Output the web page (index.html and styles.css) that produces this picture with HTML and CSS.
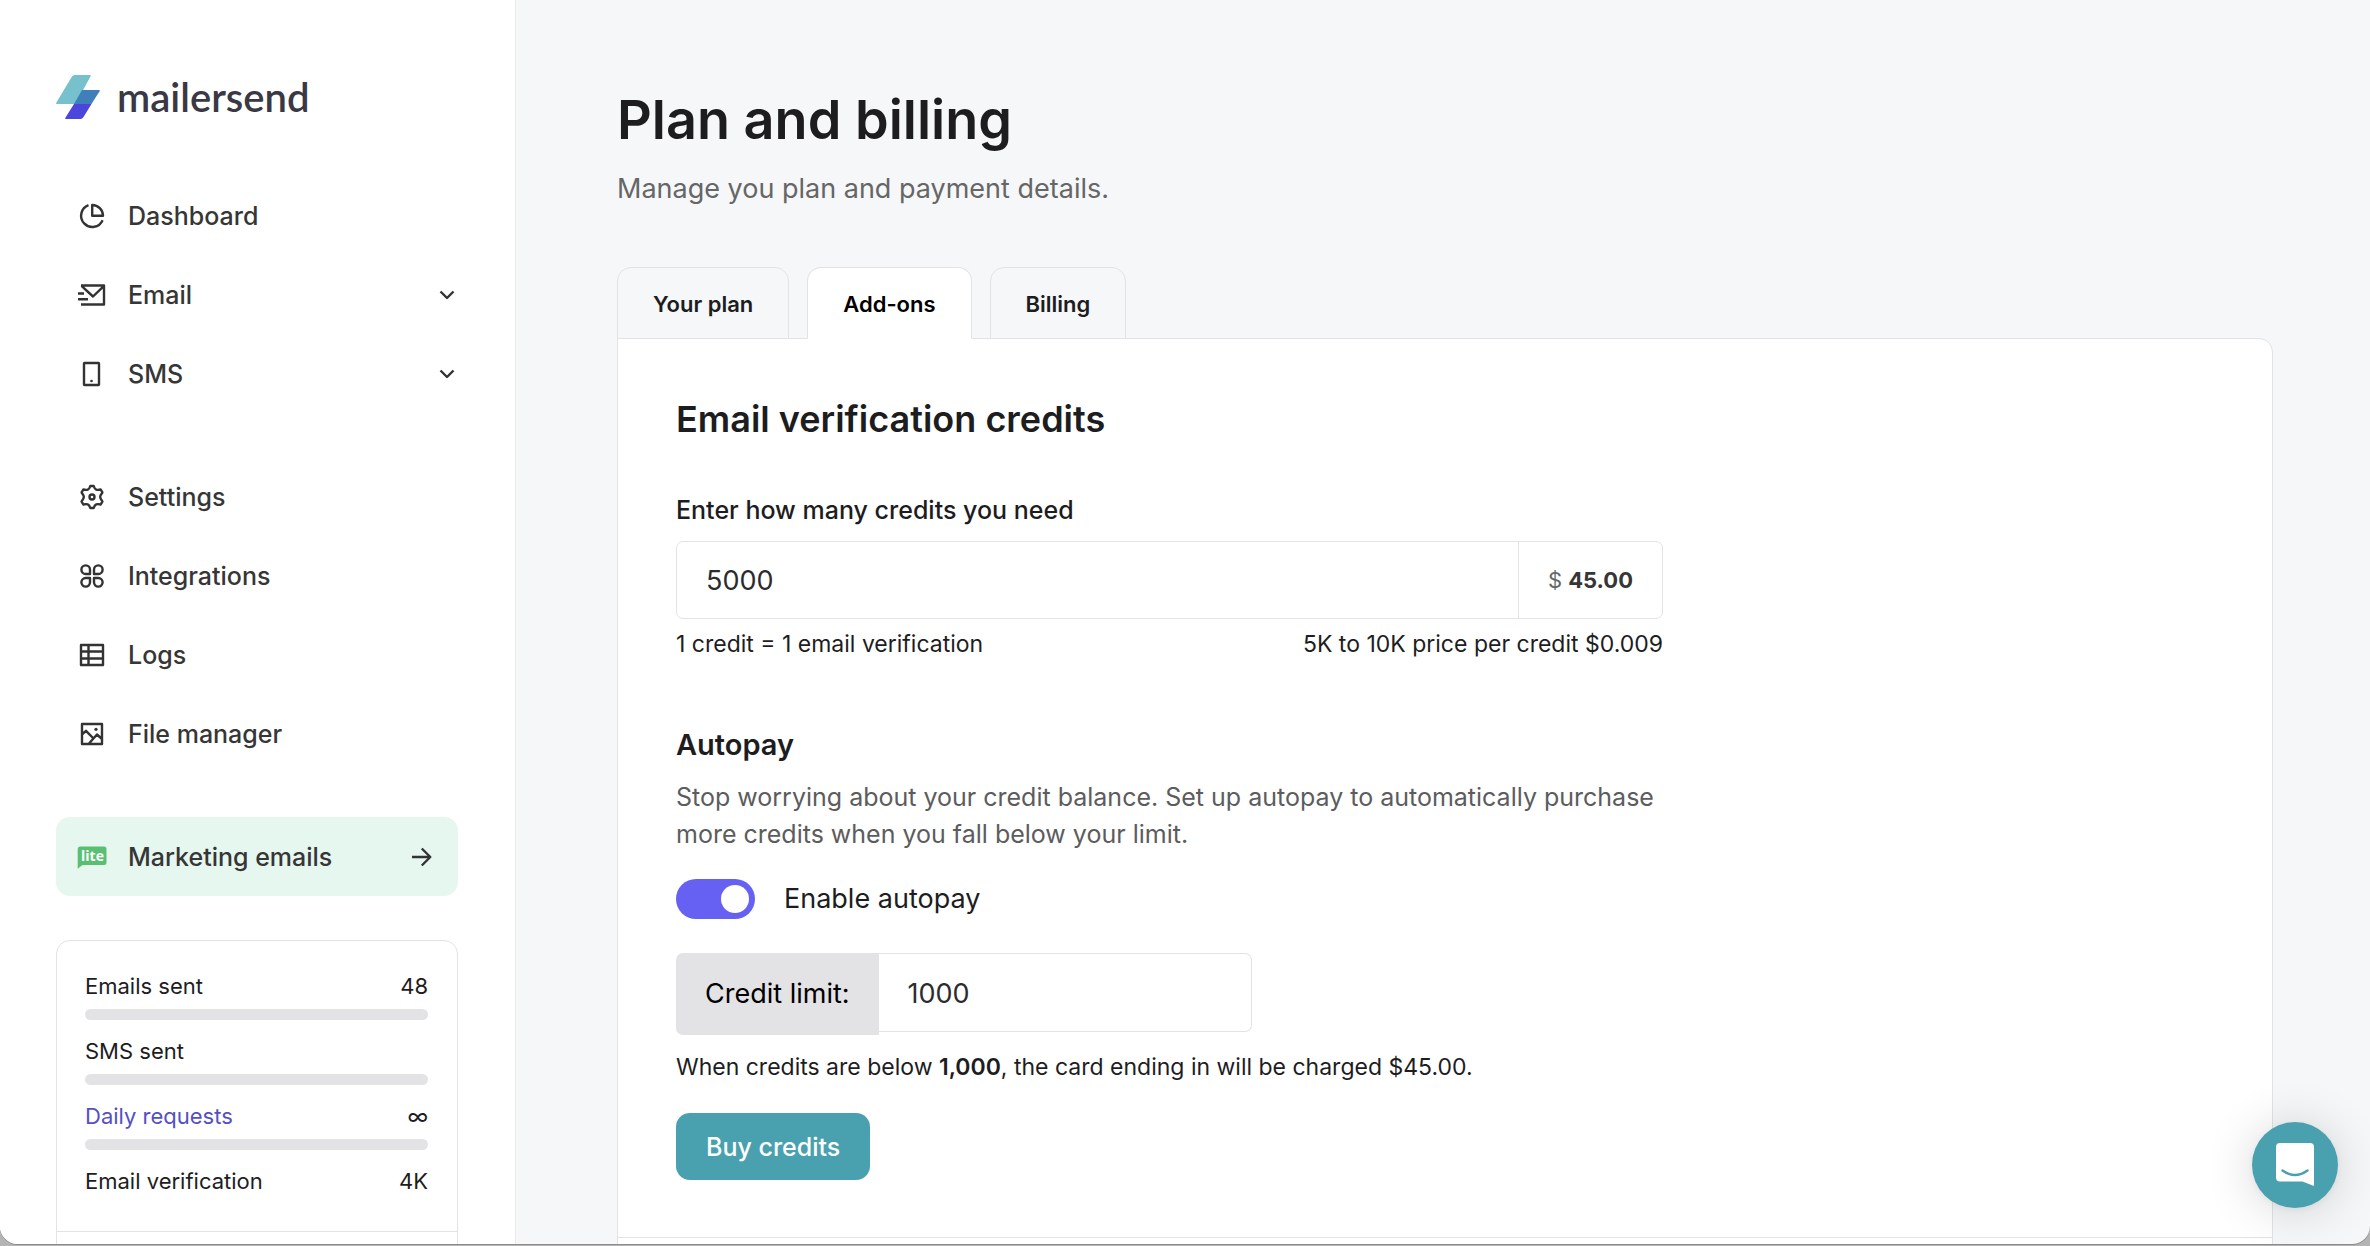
FILE: index.html
```html
<!DOCTYPE html>
<html lang="en">
<head>
<meta charset="utf-8">
<meta name="viewport" content="width=device-width, initial-scale=1">
<title>Plan and billing</title>
<link rel="stylesheet" href="styles.css">
</head>
<body>
<div class="app">
  <aside class="sidebar">
    <a class="logo" href="#">
      <svg class="logo-mark" viewBox="0 0 44 44" aria-hidden="true">
        <path d="M18.500 0H34q1.300 0 .6 1.200L19.500 29H1Q-.4 29 .4 27.600L16 1.500Q17 0 18.500 0Z" fill="#76c1cb"/>
        <path d="M26 15H43q1.300 0 .6 1.200L35.500 29H18Z" fill="#3f80ba"/>
        <path d="M18 29H35.500L27.500 42Q26.200 44 24.500 44H10Q8.500 44 9.400 42.700Z" fill="#4b45dc"/>
      </svg>
      <span class="logo-name">mailersend</span>
    </a>

    <nav class="nav" aria-label="Main">
      <ul class="nav-group">
        <li><a class="nav-item" href="#">
          <svg class="icon" viewBox="0 0 28 28" aria-hidden="true"><path d="M10.500 3.200A11.200 11.200 0 1 0 24.600 18.200"/><path d="M14.200 3V13.800H25A10.900 10.900 0 0 0 14.200 3Z"/></svg>
          <span class="nav-label">Dashboard</span></a></li>
        <li><a class="nav-item" href="#">
          <svg class="icon" viewBox="0 0 28 28" aria-hidden="true"><path d="M3 4.500H26V23.500H3M3.500 4.800L15 15.500L26 4.800M0 12.500H6M0 18.300H10"/></svg>
          <span class="nav-label">Email</span>
          <svg class="chevron" viewBox="0 0 22 22" aria-hidden="true"><path d="M4.500 7.500L11 14L17.500 7.500"/></svg></a></li>
        <li><a class="nav-item" href="#">
          <svg class="icon" viewBox="0 0 28 28" aria-hidden="true"><rect x="6" y="3" width="15" height="22" rx=".5"/><circle class="dot" cx="13.500" cy="21" r="1.300"/></svg>
          <span class="nav-label">SMS</span>
          <svg class="chevron" viewBox="0 0 22 22" aria-hidden="true"><path d="M4.500 7.500L11 14L17.500 7.500"/></svg></a></li>
      </ul>
      <ul class="nav-group">
        <li><a class="nav-item" href="#">
          <svg class="icon" viewBox="0 0 28 28" aria-hidden="true"><path d="M12.300 3H15.700Q16.600 6 18.200 6.600Q19.800 7.300 22.700 6.500L24.400 9.400Q22.200 12.300 22.200 14Q22.200 15.700 24.400 18.600L22.700 21.500Q19.800 20.700 18.200 21.400Q16.600 22 15.700 25H12.300Q11.400 22 9.800 21.400Q8.200 20.700 5.300 21.500L3.600 18.600Q5.800 15.700 5.800 14Q5.800 12.300 3.600 9.400L5.300 6.500Q8.200 7.300 9.800 6.600Q11.400 6 12.300 3Z"/><circle cx="14" cy="14" r="2.500"/></svg>
          <span class="nav-label">Settings</span></a></li>
        <li><a class="nav-item" href="#">
          <svg class="icon" viewBox="0 0 28 28" aria-hidden="true"><path d="M12 12H7.700A4.300 4.300 0 1 1 12 7.700ZM16 12H20.300A4.300 4.300 0 1 0 16 7.700ZM12 16H7.700A4.300 4.300 0 1 0 12 20.300ZM16 16H20.300A4.300 4.300 0 1 1 16 20.300Z"/></svg>
          <span class="nav-label">Integrations</span></a></li>
        <li><a class="nav-item" href="#">
          <svg class="icon" viewBox="0 0 28 28" aria-hidden="true"><path d="M3 4H25V24H3ZM3 10.500H25M3 17.500H25M10.500 4V24"/></svg>
          <span class="nav-label">Logs</span></a></li>
        <li><a class="nav-item" href="#">
          <svg class="icon" viewBox="0 0 28 28" aria-hidden="true"><path d="M4 4H24V24H4ZM4.500 14L8 10.800L16 19M11 23.500L19 14.500L24 19"/><circle class="dot" cx="18" cy="9.300" r="1.600"/></svg>
          <span class="nav-label">File manager</span></a></li>
      </ul>
    </nav>

    <a class="nav-item promo" href="#">
      <svg class="icon lite" viewBox="0 0 28 28" aria-hidden="true"><path d="M2 3.500H26Q28.500 3.500 28.500 6V19.500Q28.500 22 26 22H4.500L-.3 25.800V6Q-.3 3.500 2 3.500Z"/><text x="14.500" y="17.500">lite</text></svg>
      <span class="nav-label">Marketing emails</span>
      <svg class="icon" viewBox="0 0 28 28" aria-hidden="true"><path d="M4 14H22M13.800 5.500L22.300 14L13.800 22.500"/></svg>
    </a>

    <section class="usage" aria-label="Usage">
      <div class="usage-list">
        <div class="usage-row">
          <div class="usage-line"><label for="use-emails">Emails sent</label><span>48</span></div>
          <progress id="use-emails" value="0" max="100"></progress>
        </div>
        <div class="usage-row">
          <div class="usage-line"><label for="use-sms">SMS sent</label></div>
          <progress id="use-sms" value="0" max="100"></progress>
        </div>
        <div class="usage-row">
          <div class="usage-line"><a class="usage-link" href="#">Daily requests</a><span>∞</span></div>
          <progress aria-label="Daily requests" value="0" max="100"></progress>
        </div>
        <div class="usage-line"><span>Email verification</span><span>4K</span></div>
      </div>
      <div class="usage-footer"></div>
    </section>
  </aside>

  <main class="main">
    <h1>Plan and billing</h1>
    <p class="subtitle">Manage you plan and payment details.</p>

    <div class="tabs" role="tablist">
      <button class="tab" type="button" role="tab">Your plan</button>
      <button class="tab tab-active" type="button" role="tab" aria-selected="true">Add-ons</button>
      <button class="tab" type="button" role="tab">Billing</button>
    </div>

    <div class="panel">
      <form class="section">
        <h2>Email verification credits</h2>
        <label class="field-label" for="credits">Enter how many credits you need</label>
        <div class="field">
          <input class="field-input" id="credits" type="text" inputmode="numeric" value="5000">
          <output class="price" for="credits"><span class="currency">$</span> <b>45.00</b></output>
        </div>
        <div class="hints"><span>1 credit = 1 email verification</span><span>5K to 10K price per credit $0.009</span></div>

        <h3>Autopay</h3>
        <p class="copy">Stop worrying about your credit balance. Set up autopay to automatically purchase more credits when you fall below your limit.</p>
        <label class="switch"><input type="checkbox" checked>Enable autopay</label>
        <div class="limit">
          <label class="limit-label" for="limit">Credit limit:</label>
          <input class="limit-input" id="limit" type="text" inputmode="numeric" value="1000">
        </div>
        <p class="note">When credits are below <b>1,000</b>, the card ending in will be charged $45.00.</p>
        <button class="buy" type="button">Buy credits</button>
      </form>
      <div class="section section-next"></div>
    </div>
  </main>
</div>

<button class="chat" type="button" aria-label="Open chat">
  <svg viewBox="0 0 40 46" aria-hidden="true"><path class="bubble" d="M5 1H35Q39 1 39 5V44L27.500 39.500H5Q1 39.500 1 35.500V5Q1 1 5 1Z"/><path class="smile" d="M7.500 28.500Q20 37.500 32.500 28.500"/></svg>
</button>
</body>
</html>
```

FILE: styles.css
```css
* {
  box-sizing: border-box;
}

body,
h1,
h2,
h3,
p,
ul {
  margin: 0;
}

body {
  height: 100vh;
  overflow: hidden;
  background: #b4b4b4;
  color: #1d1d1f;
  font-family: Inter, "Liberation Sans", sans-serif;
  font-size: 22px;
  line-height: 32px;
}

button,
input {
  font: inherit;
  color: inherit;
}

a {
  color: inherit;
  text-decoration: none;
}

.app {
  display: flex;
  height: calc(100vh - 2px);
  overflow: hidden;
  border-radius: 0 0 18px 18px;
  background: #f5f7f9;
  box-shadow: 0 1px 0 #8c8c8c;
}

/* Sidebar */

.sidebar {
  flex: none;
  width: 516px;
  padding: 75px 57px 0 56px;
  border-right: 1px solid #e8eaec;
  background: #fff;
}

.logo {
  display: flex;
  align-items: center;
  gap: 17px;
  height: 44px;
}

.logo-mark {
  width: 44px;
  height: 44px;
}

.logo-name {
  font-family: Lato, sans-serif;
  font-size: 40px;
  font-weight: 600;
  line-height: 44px;
  color: #393844;
}

.nav {
  display: grid;
  gap: 44px;
  margin: 57px 0 44px;
}

.nav-group {
  padding: 0;
  list-style: none;
}

.nav-item {
  display: flex;
  align-items: center;
  gap: 22px;
  height: 79px;
  padding-left: 22px;
  border-radius: 14px;
  font-size: 25px;
  font-weight: 500;
  color: #363636;
}

.nav-label {
  flex: 1;
}

.icon,
.chevron {
  flex: none;
  width: 28px;
  height: 28px;
  overflow: visible;
  fill: none;
  stroke: #333;
  stroke-width: 2.4;
  stroke-linejoin: round;
}

.chevron {
  width: 22px;
  height: 22px;
}

.icon .dot {
  fill: #333;
  stroke: none;
}

.promo {
  padding-right: 22px;
  background: #e5f7ef;
}

.lite {
  fill: #5abf73;
  stroke: none;
}

.lite text {
  fill: #fff;
  font-family: "Open Sans", sans-serif;
  font-size: 14px;
  font-weight: 700;
  text-anchor: middle;
}

.usage {
  margin-top: 44px;
  border: 1px solid #e3e3e5;
  border-radius: 14px;
}

.usage-list {
  display: grid;
  gap: 15px;
  padding: 29px 29px 34px 28px;
}

.usage-row {
  display: grid;
  gap: 7px;
}

.usage-line {
  display: flex;
  justify-content: space-between;
}

.usage-link {
  color: #5450c4;
}

progress {
  display: block;
  width: 100%;
  height: 11px;
  border: 0;
  border-radius: 6px;
  background: #e3e3e5;
  overflow: hidden;
  appearance: none;
}

progress::-webkit-progress-bar {
  background: #e3e3e5;
}

.usage-footer {
  height: 80px;
  border-top: 1px solid #e3e3e5;
}

/* Main column */

.main {
  flex: 1;
  min-width: 0;
  padding: 86px 97px 0 101px;
}

h1 {
  font-size: 54px;
  font-weight: 600;
  line-height: 68px;
}

.subtitle {
  margin: 15px 0 58px;
  font-size: 27px;
  line-height: 40px;
  color: #666;
}

.tabs {
  display: flex;
  gap: 18px;
}

.tab {
  position: relative;
  height: 72px;
  margin-bottom: -1px;
  padding: 2px 35px 0;
  border: 1px solid #e3e3e5;
  border-radius: 14px 14px 0 0;
  background: transparent;
  font-weight: 600;
}

.tab-active {
  border-bottom-color: #fff;
  background: #fff;
  color: #000;
}

.panel {
  border: 1px solid #e3e3e5;
  border-radius: 0 14px 0 0;
  background: #fff;
}

.section {
  padding: 58px 58px 57px;
}

.section > * {
  max-width: 987px;
}

.section-next {
  height: 80px;
  border-top: 1px solid #e3e3e5;
}

h2 {
  font-size: 36px;
  font-weight: 600;
  line-height: 44px;
}

.field-label {
  display: block;
  margin: 53px 0 15px;
  font-size: 25px;
  font-weight: 500;
}

.field {
  display: flex;
  height: 78px;
  border: 1px solid #e3e3e5;
  border-radius: 7px;
}

.field-input,
.limit-input {
  flex: 1;
  min-width: 0;
  padding: 1px 29px 0;
  border: 0;
  background: transparent;
  font-size: 27px;
  color: #2c2c2e;
}

.price {
  display: flex;
  align-items: center;
  gap: 6px;
  padding: 0 29px;
  border-left: 1px solid #e3e3e5;
  color: #363636;
}

.currency {
  color: #666;
}

.hints {
  display: flex;
  justify-content: space-between;
  margin-top: 9px;
  font-size: 23px;
}

h3 {
  margin: 67px 0 16px;
  font-size: 29px;
  font-weight: 600;
  line-height: 36px;
}

.copy {
  font-size: 25px;
  line-height: 37px;
  color: #5c5c5e;
}

.switch {
  display: flex;
  align-items: center;
  gap: 29px;
  height: 40px;
  margin: 26px 0 34px;
  font-size: 27px;
}

.switch input {
  width: 79px;
  height: 40px;
  margin: 0;
  padding: 6px;
  border-radius: 20px;
  background: #6661f3;
  appearance: none;
}

.switch input::before {
  content: "";
  display: block;
  width: 28px;
  height: 28px;
  margin-left: auto;
  border-radius: 50%;
  background: #fff;
}

.limit {
  display: flex;
  align-items: flex-start;
  width: 576px;
  font-size: 27px;
}

.limit-label {
  padding: 25px 29px;
  border-radius: 7px 0 0 7px;
  background: #e3e3e5;
  color: #000;
}

.limit-input {
  height: 79px;
  border: 1px solid #e3e3e5;
  border-left: 0;
  border-radius: 0 7px 7px 0;
}

.note {
  margin: 16px 0 30px;
  font-size: 23px;
}

.note b {
  font-weight: 600;
}

.buy {
  display: block;
  height: 67px;
  padding: 0 30px;
  border: 0;
  border-radius: 14px;
  background: #49a1b0;
  font-size: 25px;
  font-weight: 500;
  color: #fff;
}

/* Chat launcher, floating over the page */

.chat {
  position: fixed;
  right: 32px;
  bottom: 38px;
  display: grid;
  place-items: center;
  width: 86px;
  height: 86px;
  padding: 0;
  border: 0;
  border-radius: 50%;
  background: #49a1b0;
  box-shadow: 0 2px 9px rgba(0, 0, 0, 0.06), 0 3px 50px rgba(0, 0, 0, 0.16);
}

.chat svg {
  width: 40px;
  height: 46px;
}

.bubble {
  fill: #fff;
}

.smile {
  fill: none;
  stroke: #49a1b0;
  stroke-width: 2.4;
  stroke-linecap: round;
}
```
